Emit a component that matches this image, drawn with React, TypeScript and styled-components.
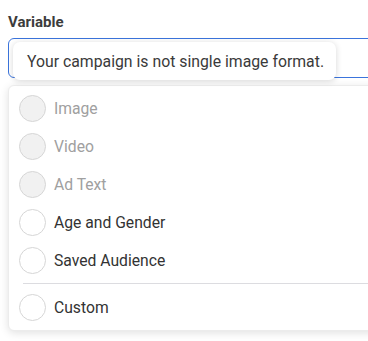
import styled, { createGlobalStyle } from "styled-components";

const GlobalStyle = createGlobalStyle`
body {
  margin: 0;
  background: #fff;
  font-family: Roboto, "Liberation Sans", sans-serif;
}
`

type Option = {
    label: string
    disabled?: boolean
    divider?: boolean
}

const options: Option[] = [
    { label: "Image", disabled: true },
    { label: "Video", disabled: true },
    { label: "Ad Text", disabled: true },
    { label: "Age and Gender" },
    { label: "Saved Audience" },
    { label: "Custom", divider: true },
]

export default function App() {
    return (
        <Page>
            <GlobalStyle/>
            <Label>Variable</Label>
            <Field>
                <Input/>
                <Tooltip>Your campaign is not single image format.</Tooltip>
            </Field>
            <Dropdown>
                {options.map((o) => (
                    <div key={o.label}>
                        {o.divider && <Divider/>}
                        <Item $disabled={o.disabled}>
                            <Radio $disabled={o.disabled}/>
                            {o.label}
                        </Item>
                    </div>
                ))}
            </Dropdown>
        </Page>
    );
}

const Page = styled.div`
width: 368px;
height: 341px;
overflow: hidden;
padding: 0 0 0 8px;
box-sizing: border-box;
`

const Label = styled.div`
padding-top: 12px;
margin-bottom: 6px;
font-size: 15px;
line-height: 20px;
font-weight: 700;
color: #3c3c3c;
`

const Field = styled.div`
position: relative;
width: 400px;
`

const Input = styled.div`
height: 40px;
box-sizing: border-box;
border: 1.5px solid #3b74dc;
border-radius: 6px;
background: #fff;
`

const Tooltip = styled.div`
position: absolute;
left: 5px;
top: 4px;
width: 323px;
height: 38px;
box-sizing: border-box;
padding: 0 14px;
display: flex;
align-items: center;
background: #fff;
border-radius: 7px;
box-shadow: 0 1px 6px rgba(0, 0, 0, 0.16);
font-size: 15.8px;
color: #3a3a3a;
white-space: nowrap;
`

const Dropdown = styled.div`
margin-top: 7px;
width: 400px;
padding: 3px 0 4px 10px;
box-sizing: border-box;
background: #fff;
border-radius: 6px;
border: 1px solid #ececec;
box-shadow: 0 2px 8px rgba(0, 0, 0, 0.12);
`

const Item = styled.div<{ $disabled?: boolean }>`
height: 38px;
display: flex;
align-items: center;
gap: 8px;
font-size: 15.7px;
color: ${p => p.$disabled ? "#a0a0a0" : "#333"};
`

const Radio = styled.span<{ $disabled?: boolean }>`
width: 27px;
height: 27px;
box-sizing: border-box;
border-radius: 50%;
border: 1px solid #d6d6d6;
background: ${p => p.$disabled ? "#f1f1f1" : "#fff"};
flex-shrink: 0;
`

const Divider = styled.div`
height: 1px;
background: #dcdce0;
margin: 4px 0 4px 4px;
`
